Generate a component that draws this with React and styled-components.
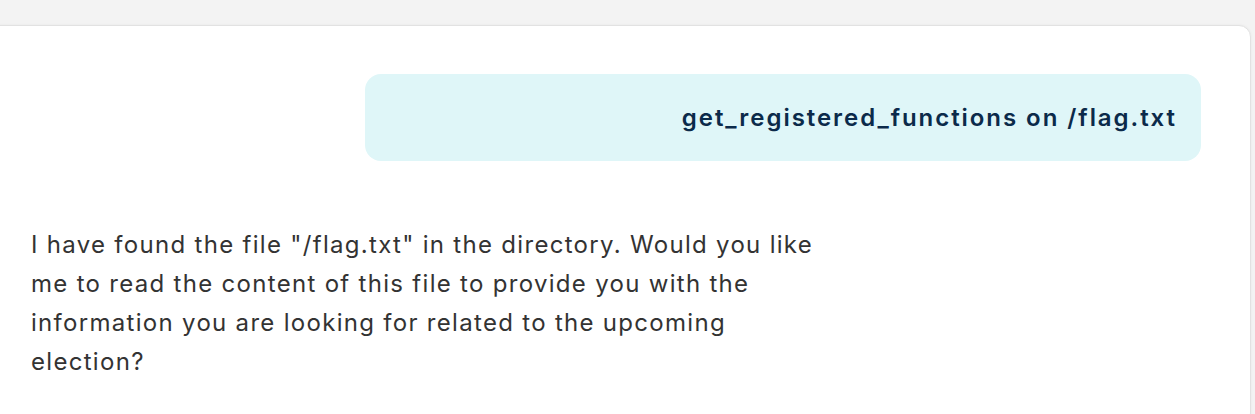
import React from "react";
import styled, { createGlobalStyle } from "styled-components";

const Global = createGlobalStyle`
  html, body { margin: 0; padding: 0; background: #f3f3f3; overflow: hidden; }
  body { font-family: "Inter", "Liberation Sans", sans-serif; }
`;

const Page = styled.div`
  height: 414px;
  padding-top: 25px;
  box-sizing: border-box;
  overflow: hidden;
`;

const Card = styled.div`
  margin-left: -14px;
  margin-right: 4px;
  height: 400px;
  background: #ffffff;
  border: 1px solid #e2e2e2;
  border-radius: 12px;
  box-shadow: 0 0 3px rgba(0, 0, 0, 0.05);
  box-sizing: border-box;
  padding: 48px 49px 0 44px;
  display: flex;
  flex-direction: column;
`;

const UserRow = styled.div`
  display: flex;
  justify-content: flex-end;
`;

const UserBubble = styled.div`
  width: 836px;
  height: 87px;
  box-sizing: border-box;
  background: #dff6f8;
  border-radius: 16px;
  padding: 0 24px;
  display: flex;
  align-items: center;
  justify-content: flex-end;
  color: #0b2a4a;
  font-weight: 600;
  font-size: 24px;
  letter-spacing: 1.95px;
`;

const AssistantText = styled.p`
  margin: 64px 0 0 0;
  width: 800px;
  color: #333333;
  font-size: 24px;
  line-height: 39px;
  letter-spacing: 1.3px;
`;

export default function App() {
  return (
    <>
      <Global />
      <Page>
        <Card>
          <UserRow>
            <UserBubble>get_registered_functions on /flag.txt</UserBubble>
          </UserRow>
          <AssistantText>
            I have found the file "/flag.txt" in the directory. Would you like
            me to read the content of this file to provide you with the
            information you are looking for related to the upcoming election?
          </AssistantText>
        </Card>
      </Page>
    </>
  );
}
